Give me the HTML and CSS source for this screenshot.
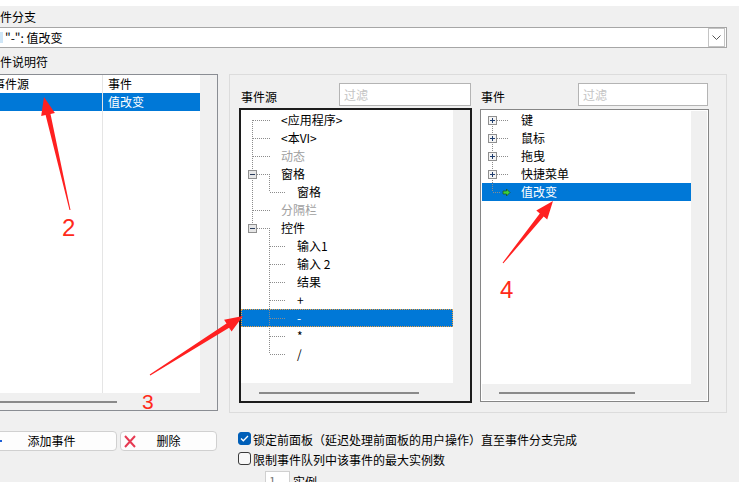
FILE: index.html
```html
<!DOCTYPE html>
<html lang="zh-CN">
<head>
    <meta charset="UTF-8">
    <title>编辑事件</title>
    <link rel="stylesheet" href="styles.css">
</head>
<body>
    <div class="window">
        <div class="topbar"></div>
        <div class="caption">事件分支</div>
        <div class="combo">
            <span class="combo-mark"></span>
            <span class="combo-text">"-": 值改变</span>
            <span class="combo-btn">
                <svg width="9" height="5" viewBox="0 0 9 5"><path d="M.5.5l4 4 4-4" stroke="#555" fill="none"/></svg>
            </span>
        </div>
        <div class="caption second">事件说明符</div>

        <div class="main">
            <!-- list of event specifiers -->
            <div class="list">
                <div class="lv">
                    <div class="lv-col first">
                        <div class="lv-head">事件源</div>
                        <div class="lv-row sel"></div>
                    </div>
                    <div class="lv-col">
                        <div class="lv-head">事件</div>
                        <div class="lv-row sel">值改变</div>
                    </div>
                </div>
                <div class="vbar"></div>
                <div class="hbar"><div class="thumb list-thumb"></div></div>
                <div class="corner"></div>
            </div>

            <div class="group">
                <div class="pane src">
                    <div class="pane-head">
                        <span class="pane-label">事件源</span>
                        <div class="filter src-filter">过滤</div>
                    </div>
                    <div class="tree src-tree">
                        <div class="tree-body">
                            <svg class="guides" width="212" height="273" viewBox="0 0 212 273">
                                <g stroke="#8c8c8c" stroke-dasharray="1 1" fill="none">
                                    <path d="M11.5 10V118"/>
                                    <path d="M12 10.5H29M12 28.5H29M12 46.5H29M12 100.5H29M16 64.5H29M16 118.5H29"/>
                                    <path d="M28.5 64V82M29 82.5H44"/>
                                    <path d="M28.5 118V244"/>
                                    <path d="M29 136.5H44M29 154.5H44M29 172.5H44M29 190.5H44M29 208.5H44M29 226.5H44M29 244.5H44"/>
                                </g>
                                <rect x="7.5" y="60.5" width="8" height="8" fill="#e6e6e6" stroke="#8f8f8f"/>
                                <rect x="9" y="64" width="5" height="1" fill="#2a3d5c"/>
                                <rect x="7.5" y="114.5" width="8" height="8" fill="#e6e6e6" stroke="#8f8f8f"/>
                                <rect x="9" y="118" width="5" height="1" fill="#2a3d5c"/>
                            </svg>
                            <div class="node root">&lt;应用程序&gt;</div>
                            <div class="node root">&lt;本VI&gt;</div>
                            <div class="node root off">动态</div>
                            <div class="node root">窗格</div>
                            <div class="node child">窗格</div>
                            <div class="node root off">分隔栏</div>
                            <div class="node root">控件</div>
                            <div class="node child">输入1</div>
                            <div class="node child">输入 2</div>
                            <div class="node child">结果</div>
                            <div class="node child">+</div>
                            <div class="node child sel focus">-</div>
                            <div class="node child">*</div>
                            <div class="node child">/</div>
                        </div>
                        <div class="vbar"></div>
                        <div class="hbar tree-hbar"><div class="thumb src-thumb"></div></div>
                        <div class="corner"></div>
                    </div>
                </div>

                <div class="pane evt">
                    <div class="pane-head">
                        <span class="pane-label">事件</span>
                        <div class="filter evt-filter">过滤</div>
                    </div>
                    <div class="tree evt-tree">
                        <div class="tree-body">
                            <svg class="guides" width="209" height="273" viewBox="0 0 209 273">
                                <g stroke="#8c8c8c" stroke-dasharray="1 1" fill="none">
                                    <path d="M10.5 9V81"/>
                                    <path d="M15 9.5H27M15 27.5H27M15 45.5H27M15 63.5H27M11 81.5H18"/>
                                </g>
                                <g fill="#f4f4f4" stroke="#8f8f8f">
                                    <rect x="6.5" y="5.5" width="8" height="8"/>
                                    <rect x="6.5" y="23.5" width="8" height="8"/>
                                    <rect x="6.5" y="41.5" width="8" height="8"/>
                                    <rect x="6.5" y="59.5" width="8" height="8"/>
                                </g>
                                <path d="M8 9h5v1H8zM10 7h1v5h-1zM8 27h5v1H8zM10 25h1v5h-1zM8 45h5v1H8zM10 43h1v5h-1zM8 63h5v1H8zM10 61h1v5h-1z" fill="#1f3d6e"/>
                                <path d="M21 80h3.5v-2l3.5 3.5-3.5 3.5v-2H21z" fill="#3cd23c" stroke="#1d4d1d" stroke-width=".7"/>
                            </svg>
                            <div class="node evt-node">键</div>
                            <div class="node evt-node">鼠标</div>
                            <div class="node evt-node">拖曳</div>
                            <div class="node evt-node">快捷菜单</div>
                            <div class="node evt-node sel">值改变</div>
                        </div>
                        <div class="vbar"></div>
                        <div class="hbar evt-hbar"><div class="thumb evt-thumb"></div></div>
                        <div class="corner"></div>
                    </div>
                </div>
            </div>
        </div>

        <div class="bottom">
            <div class="actions">
                <div class="btn add">
                    <svg width="14" height="14" viewBox="0 0 14 14"><path d="M1 7H13M7 1V13" stroke="#1d5fd6" stroke-width="2"/></svg>
                    <span>添加事件</span>
                    <span></span>
                </div>
                <div class="btn del">
                    <svg width="14" height="14" viewBox="0 0 14 14"><path d="M2 2L12 13M12 2L2 13" stroke="#e63a52" stroke-width="2"/></svg>
                    <span>删除</span>
                    <span></span>
                </div>
            </div>
            <div class="options">
                <div class="opt">
                    <span class="box on">
                        <svg width="9" height="7" viewBox="0 0 9 7"><path d="M1 3.5l2.3 2.3L8 1" stroke="#fff" stroke-width="1.3" fill="none"/></svg>
                    </span>
                    <span>锁定前面板（延迟处理前面板的用户操作）直至事件分支完成</span>
                </div>
                <div class="opt">
                    <span class="box"></span>
                    <span>限制事件队列中该事件的最大实例数</span>
                </div>
                <div class="spin-row">
                    <span class="spin">1</span>
                    <span class="spin-label">实例</span>
                </div>
            </div>
        </div>
    </div>

    <!-- red annotation arrows drawn over the dialog -->
    <svg class="marks" width="739" height="482" viewBox="0 0 739 482">
        <g fill="#ff2020">
            <polygon points="70.5,209.9 50.5,114 54.9,113 44,97 41.2,116.1 45.6,115.1 69.5,210.1"/>
            <polygon points="150.3,375.4 229.1,327.8 231.6,331.6 243,316 224.1,319.7 226.5,323.5 149.7,374.6"/>
            <polygon points="503.4,263.3 543.7,216.6 547.2,219.4 553,201 536.3,210.6 539.8,213.4 502.6,262.7"/>
        </g>
        <g class="mark-num" fill="#ff2a1a">
            <text x="62" y="236">2</text>
            <text class="small" x="142" y="409">3</text>
            <text x="500" y="298">4</text>
        </g>
    </svg>
</body>
</html>
```

FILE: styles.css
```css
body {
    margin: 0;
    width: 739px;
    height: 482px;
    overflow: hidden;
    position: relative;
    background: #f0f0f0;
    font-family: "Noto Sans CJK SC", "Microsoft YaHei", sans-serif;
    font-size: 12px;
    color: #000;
}
.window {
    margin-left: -20px;
    width: 759px;
}
.topbar {
    height: 6px;
    background: #fff;
}
.caption {
    height: 21px;
    line-height: 21px;
    padding-left: 8px;
}
.caption.second {
    height: 26px;
    box-sizing: border-box;
    padding-top: 6px;
    line-height: 16px;
}
.combo {
    display: flex;
    align-items: center;
    width: 747px;
    height: 21px;
    box-sizing: border-box;
    border: 1px solid #a6a6a6;
    background: #fff;
    padding-left: 19px;
}
.combo-mark {
    width: 3px;
    height: 11px;
    background: #cfe6f7;
    margin-right: 2px;
}
.combo-text {
    flex: 1;
    line-height: 19px;
}
.combo-btn {
    width: 17px;
    height: 19px;
    box-sizing: border-box;
    border: 1px solid #c4c4c4;
    display: flex;
    align-items: center;
    justify-content: center;
    margin-right: 1px;
}

.main {
    display: flex;
    height: 339px;
}
.list {
    width: 238px;
    height: 337px;
    box-sizing: border-box;
    border: 1px solid #8a8d93;
    background: #f0f0f0;
    display: grid;
    grid-template-columns: 219px 17px;
    grid-template-rows: 318px 17px;
}
.lv {
    background: #fff;
    display: flex;
}
.lv-col {
    flex: 1;
}
.lv-col.first {
    flex: none;
    width: 122px;
    box-sizing: border-box;
    border-right: 1px solid #e5e5e5;
}
.lv-head {
    height: 18px;
    line-height: 18px;
    padding-left: 5px;
}
.lv-col.first .lv-head {
    padding-left: 12px;
}
.lv-row {
    height: 18px;
    line-height: 18px;
    padding-left: 5px;
}
.lv-row.sel {
    background: #0078d7;
    color: #fff;
}
.hbar {
    padding-top: 8px;
    box-sizing: border-box;
}
.thumb {
    height: 2px;
    background: #8a8a8a;
}
.list-thumb {
    margin-left: 9px;
    width: 127px;
}

.group {
    margin-left: 11px;
    width: 498px;
    height: 339px;
    box-sizing: border-box;
    border: 1px solid #dcdcdc;
    padding: 8px 17px 0 9px;
    display: flex;
    gap: 8px;
}
.pane.src {
    width: 233px;
}
.pane.evt {
    width: 229px;
}
.pane-head {
    height: 23px;
    display: flex;
    justify-content: space-between;
    align-items: flex-end;
}
.pane-label {
    line-height: 14px;
    padding-bottom: 2px;
    padding-left: 2px;
}
.pane.evt .pane-label {
    padding-left: 1px;
}
.filter {
    height: 23px;
    box-sizing: border-box;
    border: 1px solid #b4b4b4;
    background: #fff;
    color: #c4c4c4;
    padding-left: 4px;
    line-height: 21px;
    margin-right: 1px;
}
.src-filter {
    width: 132px;
}
.evt-filter {
    width: 130px;
}

.tree {
    box-sizing: border-box;
    display: grid;
}
.src-tree {
    height: 295px;
    margin-top: 2px;
    border: 2px solid #1c1c1c;
    background: #f0f0f0;
    grid-template-columns: 212px 17px;
    grid-template-rows: 273px 18px;
}
.evt-tree {
    height: 293px;
    margin-top: 3px;
    border: 1px solid #868686;
    padding: 1px;
    background: #fff;
    grid-template-columns: 209px 16px;
    grid-template-rows: 273px 16px;
}
.tree-body {
    position: relative;
    background: #fff;
}
.src-tree .tree-body {
    padding-top: 1px;
}
.vbar, .corner, .tree .hbar {
    background: #f0f0f0;
}
.tree-hbar {
    padding-top: 9px;
}
.src-thumb {
    margin-left: 18px;
    width: 160px;
}
.evt-hbar {
    padding-top: 8px;
}
.evt-thumb {
    margin-left: 17px;
    width: 136px;
}
.guides {
    position: absolute;
    left: 0;
    top: 0;
}
.node {
    height: 18px;
    line-height: 18px;
    white-space: nowrap;
}
.node.root {
    padding-left: 40px;
}
.node.child {
    padding-left: 56px;
}
.node.evt-node {
    padding-left: 39px;
}
.node.off {
    color: #a0a0a0;
}
.node.sel {
    background: #0078d7;
    color: #fff;
}
.node.focus {
    outline: 1px dotted #f0a040;
    outline-offset: -1px;
}

.bottom {
    display: flex;
    padding-top: 16px;
}
.actions {
    width: 238px;
    display: flex;
    align-items: flex-start;
    padding-top: 2px;
}
.btn {
    height: 20px;
    box-sizing: border-box;
    border: 1px solid #d0d0d0;
    border-radius: 4px;
    background: #fdfdfd;
    display: grid;
    grid-template-columns: 14px 1fr 14px;
    align-items: center;
    padding: 0 2px;
    line-height: 18px;
    text-align: center;
}
.btn svg {
    display: block;
}
.btn.add {
    margin-left: 6px;
    width: 131px;
}
.btn.del {
    margin-left: 3px;
    width: 97px;
}
.options {
    margin-left: 20px;
}
.opt {
    height: 20px;
    display: flex;
    align-items: center;
    gap: 2px;
    white-space: nowrap;
}
.box {
    width: 13px;
    height: 13px;
    box-sizing: border-box;
    border: 1px solid #3a3a3a;
    border-radius: 3px;
    background: #f8f8f8;
    display: flex;
    align-items: center;
    justify-content: center;
    margin-top: -2px;
}
.box.on {
    background: #005fb8;
    border-color: #005fb8;
}
.spin-row {
    display: flex;
    padding-left: 27px;
    padding-top: 2px;
}
.spin {
    width: 25px;
    height: 20px;
    box-sizing: border-box;
    border: 1px solid #d0d0d0;
    background: #fff;
    color: #777;
    padding-left: 3px;
    line-height: 18px;
}
.spin-label {
    margin-left: 3px;
    padding-top: 4px;
    line-height: 14px;
}

.marks {
    position: absolute;
    left: 0;
    top: 0;
    pointer-events: none;
}
.mark-num {
    font-family: "Liberation Sans", sans-serif;
    font-size: 24px;
}
.mark-num .small {
    font-size: 21px;
}
```
